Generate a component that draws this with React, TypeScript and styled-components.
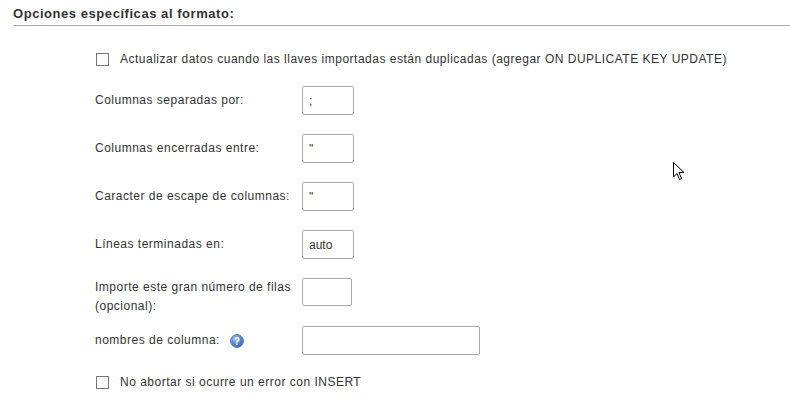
import styled, { createGlobalStyle } from "styled-components";

const Global = createGlobalStyle`
  body { margin: 0; background: #fff; font-family: "Liberation Sans", Arial, sans-serif; color: #333; }
`;

const Page = styled.div`
  position: relative;
  width: 790px;
  height: 404px;
  padding: 6px 0 0 13px;
  box-sizing: border-box;
`;

const Heading = styled.h3`
  margin: 0;
  font-size: 13px;
  font-weight: bold;
  color: #333;
  padding-bottom: 4px;
  border-bottom: 1px solid #aaa;
  letter-spacing: 0.55px;
`;

const Body = styled.div`
  padding-left: 82px;
  padding-top: 25px;
  display: flex;
  flex-direction: column;
  font-size: 12px;
  letter-spacing: 0.5px;
`;

const CheckRow = styled.label<{ $mt?: number }>`
  display: flex;
  align-items: center;
  gap: 11px;
  height: 16px;
  margin-top: ${({ $mt }) => $mt ?? 0}px;
`;

const Box = styled.span`
  width: 11px;
  height: 11px;
  border: 1px solid #777;
  background: #fff;
  margin-left: 1px;
`;

const Row = styled.div<{ $mt: number }>`
  display: flex;
  align-items: flex-start;
  margin-top: ${({ $mt }) => $mt}px;
`;

const Label = styled.div<{ $top?: boolean }>`
  width: 207px;
  line-height: 19px;
  display: flex;
  align-items: ${({ $top }) => ($top ? "flex-start" : "center")};
  gap: 10px;
  min-height: 29px;
`;

const Input = styled.div<{ $w: number; $h?: number }>`
  width: ${({ $w }) => $w}px;
  height: ${({ $h }) => $h ?? 29}px;
  box-sizing: border-box;
  border: 1px solid #aaa;
  border-radius: 2px;
  color: #333;
  padding: 0 6px;
  display: flex;
  align-items: center;
  letter-spacing: 0;
`;

const Help = () => (
  <svg width="14" height="14" viewBox="0 0 14 14">
    <defs>
      <radialGradient id="hg" cx="40%" cy="35%" r="65%">
        <stop offset="0" stopColor="#9cc3f0" />
        <stop offset="1" stopColor="#2c63b4" />
      </radialGradient>
    </defs>
    <circle cx="7" cy="7" r="6.5" fill="url(#hg)" stroke="#6a8fc8" />
    <text x="7" y="10.5" textAnchor="middle" fontSize="10" fontWeight="bold" fill="#fff" fontFamily="Liberation Sans, sans-serif">?</text>
  </svg>
);

const Cursor = styled.svg`
  position: absolute;
  left: 673px;
  top: 162px;
`;

const rows = [
  { label: "Columnas separadas por:", value: ";", w: 52, mt: 19 },
  { label: "Columnas encerradas entre:", value: '"', w: 52, mt: 19 },
  { label: "Caracter de escape de columnas:", value: '"', w: 52, mt: 19 },
  { label: "Líneas terminadas en:", value: "auto", w: 52, mt: 19 },
];

export default function App() {
  return (
    <Page>
      <Global />
      <Heading>Opciones específicas al formato:</Heading>
      <Body>
        <CheckRow>
          <Box />
          Actualizar datos cuando las llaves importadas están duplicadas (agregar ON DUPLICATE KEY UPDATE)
        </CheckRow>
        {rows.map((r) => (
          <Row key={r.label} $mt={r.mt}>
            <Label>{r.label}</Label>
            <Input $w={r.w}>{r.value}</Input>
          </Row>
        ))}
        <Row $mt={19}>
          <Label $top>Importe este gran número de filas<br />(opcional):</Label>
          <Input $w={50} $h={28} />
        </Row>
        <Row $mt={10}>
          <Label>nombres de columna: <Help /></Label>
          <Input $w={178} />
        </Row>
        <CheckRow $mt={19}>
          <Box />
          No abortar si ocurre un error con INSERT
        </CheckRow>
      </Body>
      <Cursor width="12" height="19" viewBox="0 0 12 19">
        <path d="M0.5 0.5 L0.5 15 L4 11.5 L6.5 17.5 L8.5 16.5 L6 10.5 L11 10.5 Z" fill="#fff" stroke="#000" />
      </Cursor>
    </Page>
  );
}
